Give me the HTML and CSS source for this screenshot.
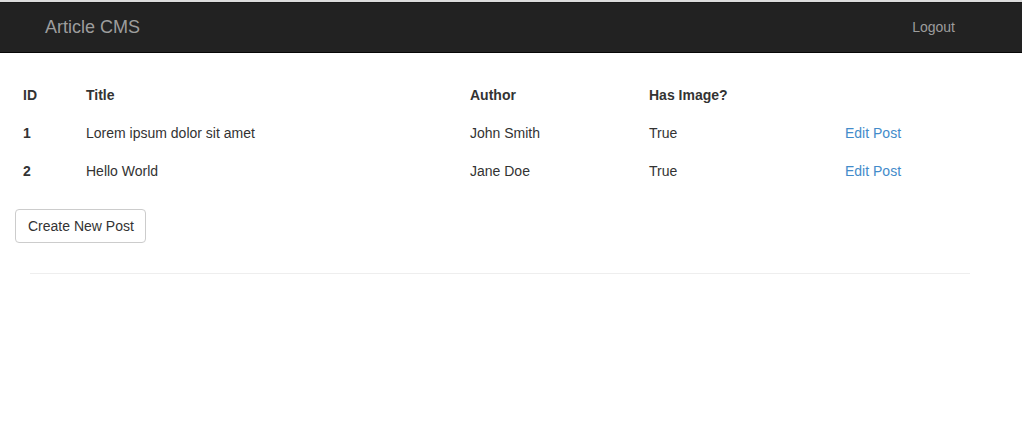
FILE: index.html
```html
<!DOCTYPE html>
<html lang="en">
<head>
<meta charset="utf-8">
<title>Article CMS</title>
<link rel="stylesheet" href="styles.css">
</head>
<body>
<div class="topstrip"></div>
<nav class="navbar">
  <a class="brand" href="#">Article CMS</a>
  <a class="nav-link" href="#">Logout</a>
</nav>
<main class="content">
  <table class="posts">
    <thead>
      <tr>
        <th class="c-id">ID</th>
        <th class="c-title">Title</th>
        <th class="c-author">Author</th>
        <th class="c-img">Has Image?</th>
        <th class="c-act"></th>
      </tr>
    </thead>
    <tbody>
      <tr>
        <th>1</th>
        <td>Lorem ipsum dolor sit amet</td>
        <td>John Smith</td>
        <td>True</td>
        <td><a href="#">Edit Post</a></td>
      </tr>
      <tr>
        <th>2</th>
        <td>Hello World</td>
        <td>Jane Doe</td>
        <td>True</td>
        <td><a href="#">Edit Post</a></td>
      </tr>
    </tbody>
  </table>
  <button class="btn" type="button">Create New Post</button>
</main>
<hr class="rule">
</body>
</html>
```

FILE: styles.css
```css
* { box-sizing: border-box; }
html, body {
  margin: 0;
  padding: 0;
  background: #fff;
  font-family: "Liberation Sans", Arial, sans-serif;
  font-size: 14px;
  line-height: 20px;
  color: #333;
}
.topstrip {
  height: 2px;
  background: #dcdcdc;
}
.navbar {
  display: flex;
  align-items: center;
  justify-content: space-between;
  height: 51px;
  background: #222;
  border-top: 1px solid #1a1a1a;
  border-bottom: 1px solid #080808;
  padding: 0 67px 0 45px;
}
.brand {
  color: #9d9d9d;
  font-size: 18px;
  text-decoration: none;
  line-height: 20px;
  margin-top: -1px;
}
.nav-link {
  color: #9d9d9d;
  text-decoration: none;
  margin-top: -1px;
}
.content {
  padding: 24px 15px 0 15px;
}
.posts {
  width: 100%;
  border-collapse: collapse;
  margin-bottom: 20px;
}
.posts th, .posts td {
  padding: 8px;
  text-align: left;
  vertical-align: top;
  line-height: 20px;
}
.posts tbody th, .posts tbody td {
  padding-top: 9px;
  border-top: 1px solid transparent;
}
.posts th { font-weight: bold; }
.posts thead th { border-bottom: 1px solid transparent; }
.c-id { width: 63px; }
.c-title { width: 384px; }
.c-author { width: 179px; }
.c-img { width: 196px; }
.posts a {
  color: #428bca;
  text-decoration: none;
}
.btn {
  font-family: "Liberation Sans", Arial, sans-serif;
  font-size: 14px;
  line-height: 20px;
  color: #333;
  background: #fff;
  border: 1px solid #ccc;
  border-radius: 4px;
  padding: 6px 11px 6px 12px;
  height: 34px;
  white-space: nowrap;
  cursor: pointer;
}
.rule {
  border: 0;
  border-top: 1px solid #eee;
  margin: 30px 0 0 30px;
  width: 940px;
}
```
